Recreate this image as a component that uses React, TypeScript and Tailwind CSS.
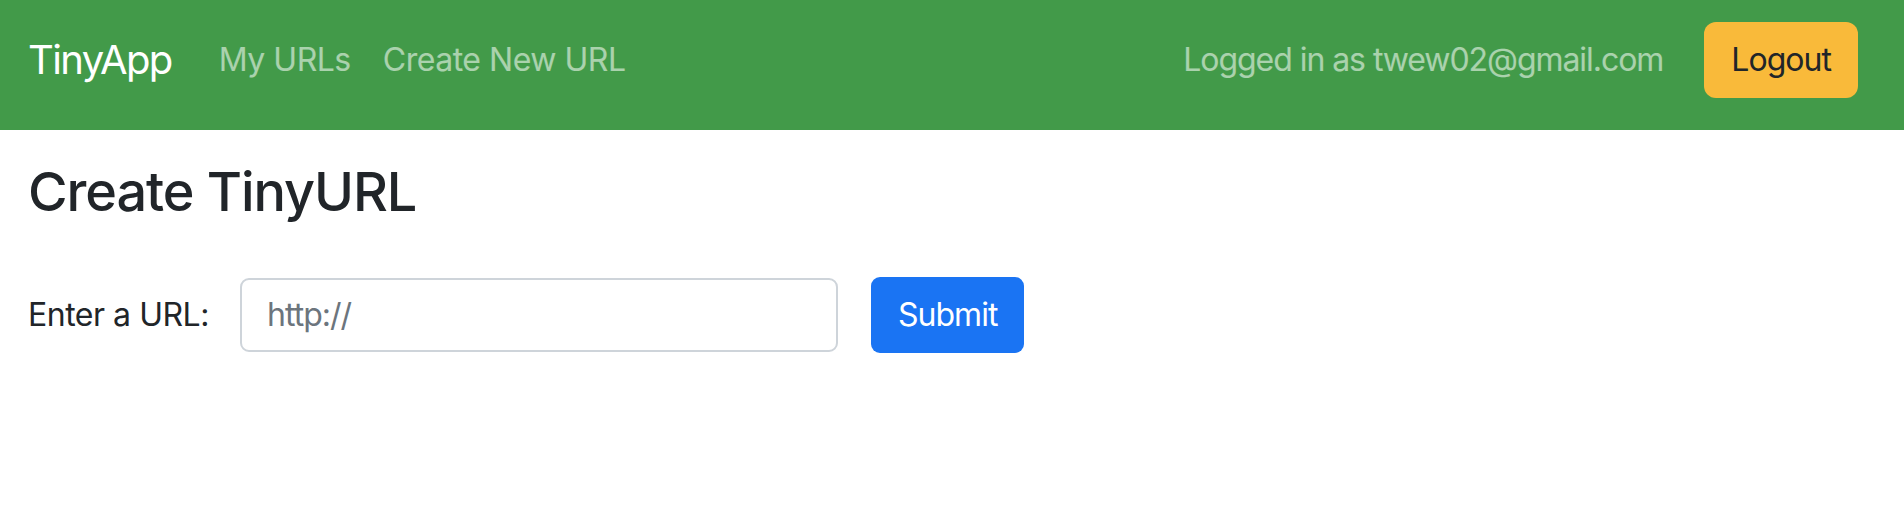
import React, { useState } from "react";

export default function App() {
  const [url, setUrl] = useState("");

  return (
    <div className="min-h-screen bg-white font-['Inter','Noto_Sans',sans-serif] text-[#212529] tracking-[-0.03em]">
      {/* Navbar */}
      <nav className="h-[130px] bg-[#429a49] flex items-center pl-[28px] pr-[46px] pb-[10px]">
        <a href="#" className="text-[40px] leading-none text-white tracking-[-0.04em] mr-[47px]">
          TinyApp
        </a>
        <div className="flex items-center gap-[32px] text-[32px] leading-[1.5] text-white/55">
          <a href="#">My URLs</a>
          <a href="#">Create New URL</a>
        </div>
        <div className="ml-auto flex items-center gap-[41px]">
          <span className="text-[32px] leading-[1.5] text-white/55 tracking-[-0.033em]">Logged in as twew02@gmail.com</span>
          <button className="h-[76px] px-[27px] rounded-[12px] bg-[#f9ba3a] text-[32px] text-[#212529] tracking-[-0.03em]">
            Logout
          </button>
        </div>
      </nav>

      {/* Main */}
      <main className="px-[28px]">
        <h1 className="mt-[30px] text-[54px] leading-[1.2] font-medium tracking-[-0.02em]">Create TinyURL</h1>
        <form
          className="mt-[52px] flex items-center"
          onSubmit={(e) => e.preventDefault()}
        >
          <label htmlFor="longURL" className="text-[32px] leading-[1.5] mr-[31px]">
            Enter a URL:
          </label>
          <input
            id="longURL"
            type="text"
            value={url}
            onChange={(e) => setUrl(e.target.value)}
            placeholder="http://"
            className="w-[598px] h-[74px] px-[25px] border-2 border-[#ced4da] rounded-[9px] text-[32px] text-[#212529] tracking-[-0.03em] placeholder:text-[#6c757d] outline-none"
          />
          <button
            type="submit"
            className="ml-[33px] h-[76px] px-[27px] rounded-[9px] bg-[#1a74f3] text-[32px] text-white tracking-[-0.03em]"
          >
            Submit
          </button>
        </form>
      </main>
    </div>
  );
}
